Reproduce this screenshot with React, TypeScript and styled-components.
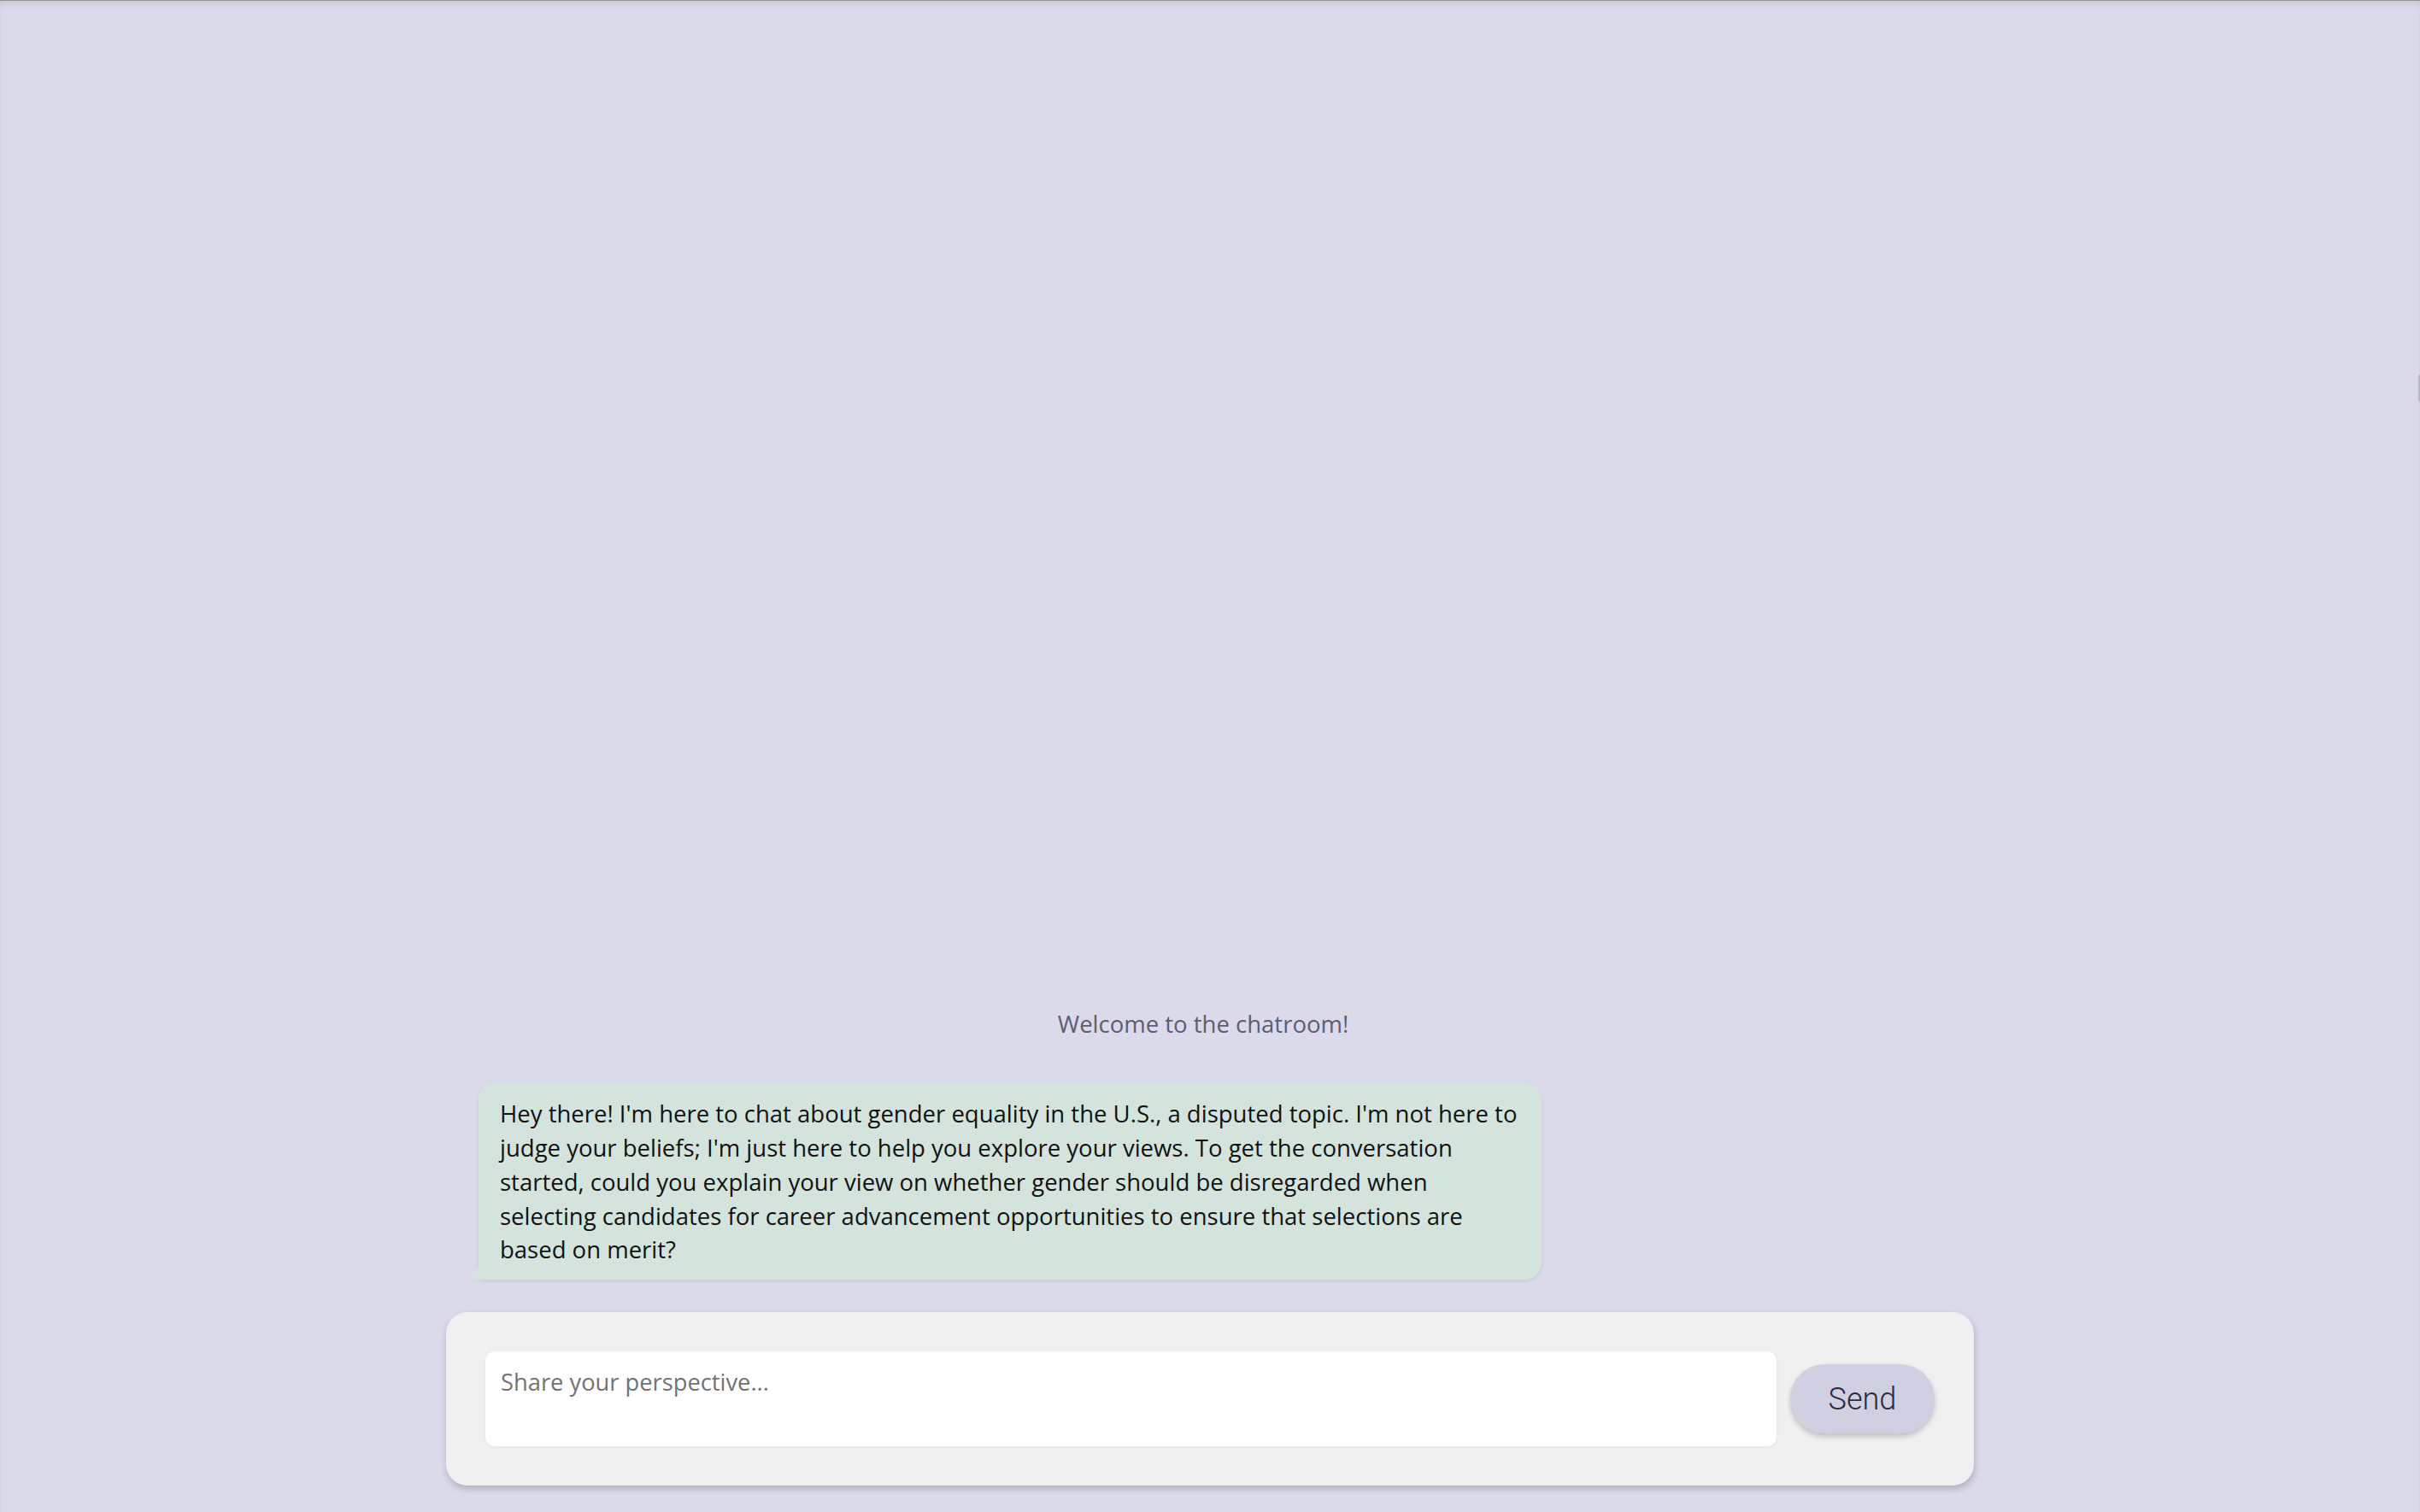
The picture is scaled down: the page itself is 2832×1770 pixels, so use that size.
import React from "react";
import styled, { createGlobalStyle } from "styled-components";

const Global = createGlobalStyle`
  html, body { margin: 0; padding: 0; height: 100%; }
  body { background: #dbdaeb; font-family: "Open Sans", "Lato", sans-serif; }
  #root { height: 100%; }
  * { box-sizing: border-box; }
`;

const Page = styled.div`
  position: relative;
  height: 100vh;
  display: flex;
  flex-direction: column;
  align-items: center;
  justify-content: flex-end;
  padding-bottom: 31px;
  background: #dbdaeb;
  border-top: 1px solid #979797;
  box-shadow: inset 0 6px 10px -4px rgba(0, 0, 0, 0.12);
  overflow: hidden;
`;

const EdgeTab = styled.div`
  position: absolute;
  right: -4px;
  top: 437px;
  width: 6px;
  height: 33px;
  border-radius: 3px;
  background: #b9b8c9;
`;

const Chat = styled.div`
  width: 1788px;
  display: flex;
  flex-direction: column;
`;

const Messages = styled.div`
  display: flex;
  flex-direction: column;
  padding: 0 38px;
`;

const Welcome = styled.div`
  text-align: center;
  font-family: "Open Sans", sans-serif;
  font-size: 27.5px;
  line-height: 42px;
  color: #5d5d70;
  margin-bottom: 47px;
  padding-right: 16px;
`;

const Bubble = styled.div<{ $mine?: boolean }>`
  position: relative;
  align-self: ${(p) => (p.$mine ? "flex-end" : "flex-start")};
  width: 1244px;
  padding: 17.5px 25px 15px 25px;
  background: #d4e4dd;
  color: #111111;
  font-family: "Open Sans", sans-serif;
  font-size: 27.5px;
  line-height: 39.7px;
  border-radius: 20px 20px 20px 0;
  box-shadow: 0 2px 4px rgba(0, 0, 0, 0.08);

  &::before {
    content: "";
    position: absolute;
    left: -10px;
    bottom: 0;
    width: 0;
    height: 0;
    border-style: solid;
    border-width: 0 0 14px 10px;
    border-color: transparent transparent #d4e4dd transparent;
  }
`;

const InputPanel = styled.div`
  margin-top: 38px;
  display: flex;
  align-items: center;
  gap: 16px;
  padding: 46px;
  background: #f0f0f0;
  border-radius: 25px;
  box-shadow: 1px 4px 8px rgba(0, 0, 0, 0.2);
`;

const TextInput = styled.textarea`
  flex: 1;
  height: 111px;
  resize: none;
  border: none;
  outline: none;
  border-radius: 11px;
  background: #ffffff;
  padding: 20px 18px;
  font-family: "Open Sans", sans-serif;
  font-size: 27.3px;
  line-height: 1.2;
  color: #111;
  box-shadow: 0 1px 4px rgba(0, 0, 0, 0.06);

  &::placeholder {
    color: #737373;
  }
`;

const SendButton = styled.button`
  width: 169px;
  height: 81px;
  border: none;
  border-radius: 41px;
  background: #d1d0e3;
  color: #2a2a3a;
  font-family: "Roboto", sans-serif;
  font-weight: 300;
  font-size: 36px;
  cursor: pointer;
  box-shadow: 0 4px 6px rgba(0, 0, 0, 0.2);
`;

export default function App() {
  return (
    <>
      <Global />
      <Page>
        <EdgeTab />
        <Chat>
          <Messages>
            <Welcome>Welcome to the chatroom!</Welcome>
            <Bubble>
              Hey there! I'm here to chat about gender equality in the U.S., a disputed topic. I'm not here to judge your beliefs; I'm just here to help you explore your views. To get the conversation started, could you explain your view on whether gender should be disregarded when selecting candidates for career advancement opportunities to ensure that selections are based on merit?
            </Bubble>
          </Messages>
          <InputPanel>
            <TextInput placeholder="Share your perspective..." />
            <SendButton>Send</SendButton>
          </InputPanel>
        </Chat>
      </Page>
    </>
  );
}
